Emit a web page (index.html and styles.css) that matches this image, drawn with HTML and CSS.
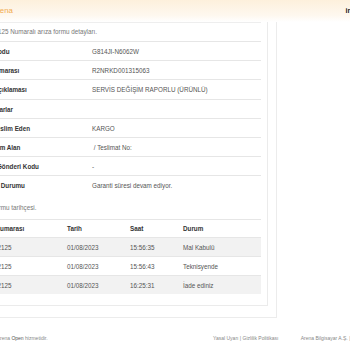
FILE: index.html
```html
<!DOCTYPE html>
<html lang="tr">

<head>
  <meta charset="UTF-8" />
  <meta name="viewport" content="width=device-width, initial-scale=1.0" />
  <title>Arıza Formu Detayları</title>
  <link rel="stylesheet" href="styles.css">
</head>

<body>
  <div class="shell">
    <header class="topbar">
      <span class="logo">Arena</span>
      <span class="top-link">irtibat</span>
    </header>

    <main class="main">
      <section class="content">
        <div class="card">
          <p class="form-title">100102125 Numaralı arıza formu detayları.</p>

          <table class="details">
            <tr>
              <th>Ürün Kodu</th>
              <td>G814JI-N6062W</td>
            </tr>
            <tr>
              <th>Seri Numarası</th>
              <td>R2NRKD001315063</td>
            </tr>
            <tr>
              <th>Arıza Açıklaması</th>
              <td>SERVİS DEĞİŞİM RAPORLU (ÜRÜNLÜ)</td>
            </tr>
            <tr>
              <th>Aksesuarlar</th>
              <td></td>
            </tr>
            <tr>
              <th>Ürün Teslim Eden</th>
              <td>KARGO</td>
            </tr>
            <tr>
              <th>İlk Teslim Alan</th>
              <td>&nbsp;/ Teslimat No:</td>
            </tr>
            <tr>
              <th>Kargo Gönderi Kodu</th>
              <td>-</td>
            </tr>
            <tr>
              <th>Garanti Durumu</th>
              <td>Garanti süresi devam ediyor.</td>
            </tr>
          </table>

          <p class="history-title">Arıza formu tarihçesi.</p>

          <table class="history">
            <thead>
              <tr>
                <th class="col-no">Form Numarası</th>
                <th class="col-date">Tarih</th>
                <th class="col-time">Saat</th>
                <th>Durum</th>
              </tr>
            </thead>
            <tbody>
              <tr>
                <td>100102125</td>
                <td>01/08/2023</td>
                <td>15:56:35</td>
                <td>Mal Kabulü</td>
              </tr>
              <tr>
                <td>100102125</td>
                <td>01/08/2023</td>
                <td>15:56:43</td>
                <td>Teknisyende</td>
              </tr>
              <tr>
                <td>100102125</td>
                <td>01/08/2023</td>
                <td>16:25:31</td>
                <td>İade ediniz</td>
              </tr>
            </tbody>
          </table>
        </div>
      </section>

      <aside class="sidebar"></aside>
    </main>

    <footer class="footer">
      <span>Arena <b>Open</b> hizmetidir.</span>
      <span class="legal">Yasal Uyarı | Gizlilik Politikası</span>
      <span>Arena Bilgisayar A.Ş. | 0850 200 0 200</span>
    </footer>
  </div>
</body>

</html>
```

FILE: styles.css
```css
* {
  box-sizing: border-box;
}

body {
  margin: 0;
  overflow: hidden;
  background: #fff;
  font-family: 'Liberation Sans', Arial, sans-serif;
  color: #555;
}

.shell {
  width: 440px;
  margin-left: -40px;
}

/* top bar */
.topbar {
  height: 22px;
  display: flex;
  align-items: center;
  justify-content: space-between;
  padding: 0 35px 2px 32px;
  background: linear-gradient(#fdf0dc, #fef8ef 70%, #fff);
}

.logo {
  font-size: 7.8px;
  color: #f2ab4f;
}

.top-link {
  font-size: 7px;
  font-weight: bold;
  color: #222;
}

/* main area */
.main {
  display: flex;
}

.content {
  width: 317px;
  padding: 0 8px 11px 13px;
  border-right: 1px solid #ececec;
  border-bottom: 1px solid #ececec;
}

.sidebar {
  flex: 1;
}

.card {
  padding: 0 6px 11px 4px;
  border-right: 1px solid #ebebeb;
  border-bottom: 1px solid #ebebeb;
}

.form-title,
.history-title {
  margin: 0;
  font-size: 6.3px;
  line-height: 10px;
  color: #777;
}

.form-title {
  padding: 4px 0 4px;
  border-top: 1px solid #eee;
}

.history-title {
  padding: 8px 0 6px;
}

table {
  width: 100%;
  border-collapse: collapse;
  font-size: 6.3px;
}

th,
td {
  text-align: left;
  padding: 5px 3px 4px;
  line-height: 9.2px;
  border-top: 1px solid #e6e6e6;
  white-space: nowrap;
}

th {
  color: #333;
  font-weight: bold;
}

td {
  color: #555;
}

.details th {
  width: 112px;
  padding-left: 0;
}

.history th {
  padding: 4px 3px 4px;
}

.history .col-no {
  width: 87px;
  padding-left: 1px;
}

.history .col-date {
  width: 63px;
}

.history .col-time {
  width: 53px;
}

.history tbody tr:nth-child(odd) td {
  background: #f2f2f2;
}

/* footer */
.footer {
  display: grid;
  grid-template-columns: 216.3px auto auto;
  padding: 17px 0 0 36.7px;
  font-size: 5px;
  color: #888;
  white-space: nowrap;
}

.legal {
  margin-right: 9px;
}

.footer b {
  font-weight: normal;
  color: #555;
}
```
